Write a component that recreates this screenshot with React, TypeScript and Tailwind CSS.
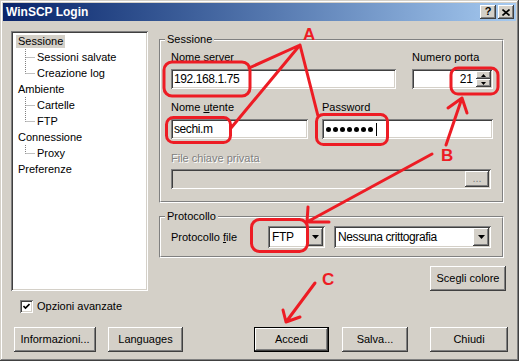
import React from 'react';

const raised =
  'bg-[#d4d0c8] shadow-[inset_-1px_-1px_0_#404040,inset_1px_1px_0_#ffffff,inset_-2px_-2px_0_#808080,inset_2px_2px_0_#d4d0c8]';
const sunken =
  'shadow-[inset_1px_1px_0_#808080,inset_-1px_-1px_0_#ffffff,inset_2px_2px_0_#404040,inset_-2px_-2px_0_#d4d0c8]';

const treeItems = [
  { label: 'Sessione', level: 0, selected: true },
  { label: 'Sessioni salvate', level: 1 },
  { label: 'Creazione log', level: 1, last: true },
  { label: 'Ambiente', level: 0 },
  { label: 'Cartelle', level: 1 },
  { label: 'FTP', level: 1, last: true },
  { label: 'Connessione', level: 0 },
  { label: 'Proxy', level: 1, last: true },
  { label: 'Preferenze', level: 0 },
];

const DownArrow = () => (
  <svg width="7" height="4" viewBox="0 0 7 4">
    <path d="M0 0h7L3.5 4z" fill="#000" />
  </svg>
);

const GroupBox = ({ title, className = '', children }: { title: string; className?: string; children: React.ReactNode }) => (
  <div className={`relative border border-t-[#808080] border-l-[#808080] border-r-white border-b-white ${className}`}>
    <span className="absolute -top-[7px] left-[5px] bg-[#d4d0c8] px-[2px] leading-[13px]">{title}</span>
    <div className="border border-t-white border-l-white border-r-[#808080] border-b-[#808080]">{children}</div>
  </div>
);

const Button = ({ label, className = '', isDefault = false }: { label: string; className?: string; isDefault?: boolean }) => (
  <div className={`h-[25px] ${isDefault ? 'border border-black' : ''} ${className}`}>
    <div className={`h-full w-full ${raised} flex items-center justify-center`}>{label}</div>
  </div>
);

export default function App() {
  return (
    <div className="relative w-[519px] h-[361px] overflow-hidden bg-[#d4d0c8] p-[3px] flex flex-col text-[11px] text-black font-['Liberation_Sans',Arial,sans-serif] shadow-[inset_-1px_-1px_0_#404040,inset_1px_1px_0_#d4d0c8,inset_-2px_-2px_0_#808080,inset_2px_2px_0_#ffffff]">
      {/* Title bar */}
      <div className="h-[18px] shrink-0 flex items-center justify-between pl-[3px] pr-[2px] bg-linear-to-r from-[#0a246a] to-[#a6caf0]">
        <span className="text-white font-bold text-[12px]">WinSCP Login</span>
        <div className="flex gap-[2px]">
          <div className={`w-[16px] h-[14px] ${raised} flex items-center justify-center font-bold text-[11px] leading-none pb-[1px]`}>?</div>
          <div className={`w-[16px] h-[14px] ${raised} flex items-center justify-center`}>
            <svg width="8" height="7" viewBox="0 0 8 7">
              <path d="M0.5 0.5l7 6M7.5 0.5l-7 6" stroke="#000" strokeWidth="1.6" />
            </svg>
          </div>
        </div>
      </div>

      {/* Body */}
      <div className="flex-1 flex flex-col px-[8px] pt-[10px]">
        <div className="flex">
          {/* Tree */}
          <div className={`w-[137px] h-[260px] bg-white ${sunken} pt-[2px] pl-[2px]`}>
            {treeItems.map((item) => (
              <div key={item.label} className="h-[16px] flex items-center">
                {item.level === 0 ? (
                  <span
                    className={`ml-[3px] px-[2px] leading-[13px] ${item.selected ? 'bg-[#d4d0c8]' : ''}`}
                  >
                    {item.label}
                  </span>
                ) : (
                  <>
                    <svg className="ml-[12px] shrink-0" width="11" height="16" viewBox="0 0 11 16">
                      <path
                        d={item.last ? 'M0.5 0v8.5M0.5 8.5h10' : 'M0.5 0v16M0.5 8.5h10'}
                        stroke="#808080"
                        strokeDasharray="1 1"
                      />
                    </svg>
                    <span className="pl-[1px] leading-[13px]">{item.label}</span>
                  </>
                )}
              </div>
            ))}
          </div>

          {/* Right column */}
          <div className="ml-[11px] mt-[8px] w-[347px] flex flex-col">
            <GroupBox title="Sessione" className="w-[345px]">
              <div className="pl-[10px] pt-[10px] pb-[12px]">
                <div className="flex">
                  <div className="w-[225px]">
                    <div className="leading-[13px]">Nome server</div>
                    <div className={`mt-[5px] h-[20px] bg-white ${sunken} flex items-center pl-[3px] text-[12px] tracking-[-0.4px]`}>192.168.1.75</div>
                  </div>
                  <div className="ml-[16px] w-[81px]">
                    <div className="leading-[13px]">Numero porta</div>
                    <div className={`mt-[5px] h-[20px] bg-white ${sunken} flex items-center justify-end pr-[2px] text-[12px]`}>
                      <span className="mr-[3px]">21</span>
                      <div className="flex flex-col">
                        <div className={`w-[15px] h-[8px] ${raised} flex items-center justify-center`}>
                          <svg width="5" height="3" viewBox="0 0 5 3"><path d="M2.5 0L5 3H0z" fill="#000" /></svg>
                        </div>
                        <div className={`w-[15px] h-[8px] ${raised} flex items-center justify-center`}>
                          <svg width="5" height="3" viewBox="0 0 5 3"><path d="M0 0h5L2.5 3z" fill="#000" /></svg>
                        </div>
                      </div>
                    </div>
                  </div>
                </div>

                <div className="flex mt-[12px]">
                  <div className="w-[137px]">
                    <div className="leading-[13px]">
                      Nome <span className="underline">u</span>tente
                    </div>
                    <div className={`mt-[5px] h-[20px] bg-white ${sunken} flex items-center pl-[3px] text-[12px] tracking-[-0.4px]`}>sechi.m</div>
                  </div>
                  <div className="ml-[14px] w-[171px]">
                    <div className="leading-[13px]">Password</div>
                    <div className={`mt-[5px] h-[20px] bg-white ${sunken} flex items-center pl-[4px] gap-[2px]`}>
                      {[0, 1, 2, 3, 4, 5, 6].map((i) => (
                        <div key={i} className="w-[5px] h-[5px] rounded-full bg-black" />
                      ))}
                      <div className="ml-[1px] w-[1px] h-[13px] bg-black" />
                    </div>
                  </div>
                </div>

                <div className="mt-[13px] w-[320px]">
                  <div className="leading-[13px] text-[#808080] [text-shadow:1px_1px_0_#ffffff]">File chiave privata</div>
                  <div className={`mt-[4px] h-[20px] bg-[#d4d0c8] ${sunken} flex items-center justify-end pr-[2px]`}>
                    <div className={`w-[24px] h-[16px] ${raised} flex items-center justify-center text-[#808080] leading-none pb-[2px]`}>...</div>
                  </div>
                </div>
              </div>
            </GroupBox>

            <GroupBox title="Protocollo" className="w-[345px] mt-[13px]">
              <div className="pl-[10px] pt-[8px] pb-[8px] flex items-center">
                <div className="w-[97px]">
                  Protocollo <span className="underline">f</span>ile
                </div>
                <div className={`w-[57px] h-[22px] bg-white ${sunken} flex items-center p-[2px]`}>
                  <span className="flex-1 pl-[2px] text-[12px] tracking-[-0.3px]">FTP</span>
                  <div className={`w-[16px] h-[18px] ${raised} flex items-center justify-center`}>
                    <DownArrow />
                  </div>
                </div>
                <div className={`ml-[9px] w-[157px] h-[22px] bg-white ${sunken} flex items-center p-[2px]`}>
                  <span className="flex-1 pl-[2px] text-[12px] tracking-[-0.4px]">Nessuna crittografia</span>
                  <div className={`w-[16px] h-[18px] ${raised} flex items-center justify-center`}>
                    <DownArrow />
                  </div>
                </div>
              </div>
            </GroupBox>

            <Button label="Scegli colore" className="self-end mt-[8px] w-[76px]" />
          </div>
        </div>

        {/* Checkbox */}
        <div className="mt-[9px] ml-[9px] flex items-center gap-[4px]">
          <div className={`w-[13px] h-[13px] bg-white ${sunken} flex items-center justify-center`}>
            <svg width="7" height="7" viewBox="0 0 7 7">
              <path d="M0.5 3l2 2 4-4" stroke="#000" strokeWidth="1.6" fill="none" />
            </svg>
          </div>
          <span className="leading-[13px]">Opzioni avanzate</span>
        </div>

        {/* Buttons */}
        <div className="mt-[14px] flex">
          <Button label="Informazioni..." className="ml-[3px] w-[82px]" />
          <Button label="Languages" className="ml-[12px] w-[75px]" />
          <Button label="Accedi" isDefault className="ml-[71px] w-[75px]" />
          <Button label="Salva..." className="ml-[13px] w-[66px]" />
          <Button label="Chiudi" className="ml-[22px] w-[78px]" />
        </div>
      </div>

      {/* Red annotations drawn over the dialog */}
      <svg
        className="absolute left-0 top-0 pointer-events-none"
        width="519"
        height="361"
        viewBox="0 0 519 361"
        fill="none"
        stroke="#ed1c24"
        strokeWidth="3"
        strokeLinecap="round"
        strokeLinejoin="round"
      >
        <rect x="164" y="62" width="86" height="34" rx="8" />
        <rect x="166.5" y="117.5" width="64" height="25" rx="7" />
        <rect x="316.5" y="114.5" width="71" height="30" rx="7" />
        <rect x="451" y="68" width="47" height="26" rx="7" />
        <rect x="251.5" y="219.5" width="56" height="32" rx="8" />
        <path d="M249 68L300 45L231 128M300 45L318 116" />
        <path d="M446 145L462 98M448 108L462 98L467 113" />
        <path d="M432 154L307 222M308 207L307 222L329 222" />
        <path d="M315 283L286 322M283 310L286 322L300 317" />
        <g fill="#ed1c24" stroke="none" fontFamily="Liberation Sans, Arial, sans-serif" fontWeight="bold" fontSize="17">
          <text x="303" y="40">A</text>
          <text x="441" y="161">B</text>
          <text x="322" y="285">C</text>
        </g>
      </svg>
    </div>
  );
}
